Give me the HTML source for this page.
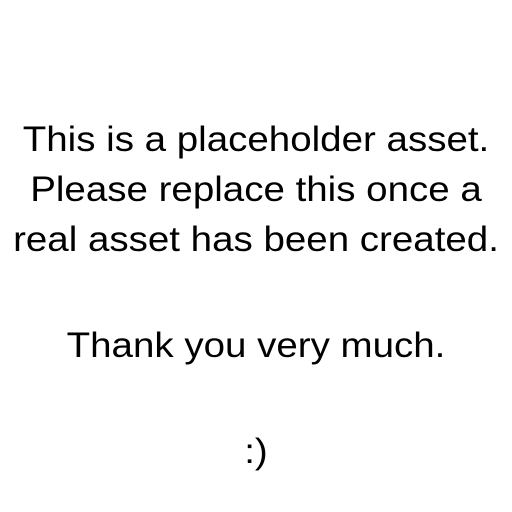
<!DOCTYPE html>
<html>
<head>
<meta charset="utf-8">
<style>
html,body{margin:0;padding:0;background:#fff;}
body{width:512px;height:512px;position:relative;overflow:hidden;font-family:"Liberation Sans","DejaVu Sans",sans-serif;color:#000;}
.l{position:absolute;left:0;width:512px;text-align:center;font-size:35px;line-height:40px;white-space:nowrap;transform:scaleX(1.1);transform-origin:256px 50%;}
</style>
</head>
<body>
<div class="l" style="top:120px">This is a placeholder asset.</div>
<div class="l" style="top:170px">Please replace this once a</div>
<div class="l" style="top:220px">real asset has been created.</div>
<div class="l" style="top:326px">Thank you very much.</div>
<div class="l" style="top:432px">:)</div>
</body>
</html>
